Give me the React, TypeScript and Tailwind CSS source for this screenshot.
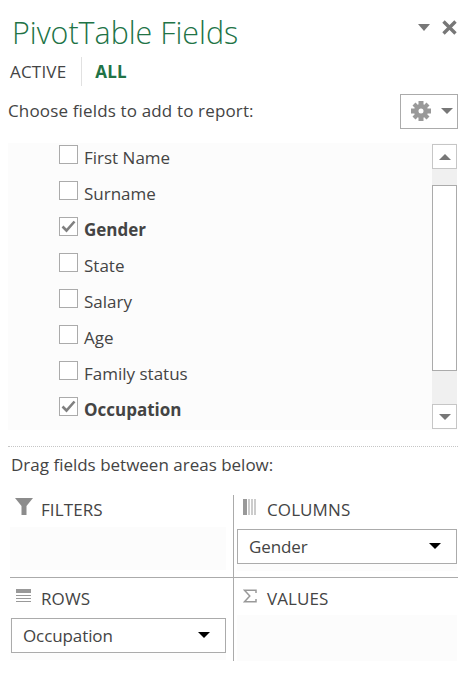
const font = "font-['Open_Sans',sans-serif]";

const fields = [
  { name: 'First Name', checked: false },
  { name: 'Surname', checked: false },
  { name: 'Gender', checked: true },
  { name: 'State', checked: false },
  { name: 'Salary', checked: false },
  { name: 'Age', checked: false },
  { name: 'Family status', checked: false },
  { name: 'Occupation', checked: true },
];

function Caret({ className }: { className: string }) {
  return <div className={`h-0 w-0 border-x-[6px] border-t-[6px] border-x-transparent ${className}`} />;
}

function Dropdown({ label }: { label: string }) {
  return (
    <div className="flex h-[35px] items-center justify-between border border-[#ababab] bg-white pl-[11px] pr-[15px] text-[17px] text-[#444]">
      <span className="tracking-[-0.1px]">{label}</span>
      <Caret className="-mt-[1px] border-t-black" />
    </div>
  );
}

function FieldRow({ name, checked }: { name: string; checked: boolean }) {
  return (
    <div className="flex h-9 items-center">
      <div className="-mt-[8px] flex h-[19px] w-[19px] items-center justify-center border border-[#ababab] bg-white">
        {checked && (
          <svg width="15" height="13" viewBox="0 0 15 13" fill="none">
            <path d="M1.5 6.5 L5.5 10.5 L13.5 1.5" stroke="#808080" strokeWidth="2.6" />
          </svg>
        )}
      </div>
      <span className={`ml-[6px] text-[17px] text-[#444] ${checked ? 'font-bold' : ''}`}>{name}</span>
    </div>
  );
}

export default function App() {
  return (
    <div className={`h-[673px] w-[468px] overflow-hidden bg-white ${font}`}>
      {/* Title */}
      <div className="flex h-[57px] items-start justify-between pl-[12px] pr-[11px] pt-[11px]">
        <h1 className="text-[30.4px] font-light leading-[44px] text-[#217346]">PivotTable Fields</h1>
        <div className="mt-[9px] flex items-center gap-[12px]">
          <div className="h-0 w-0 border-x-[6.5px] border-t-[7px] border-x-transparent border-t-[#777]" />
          <svg width="15" height="15" viewBox="0 0 15 15">
            <path d="M1.5 1.5 L13.5 13.5 M13.5 1.5 L1.5 13.5" stroke="#777" strokeWidth="3.4" />
          </svg>
        </div>
      </div>

      {/* Tabs */}
      <div className="flex h-[29px] items-center pl-[10px] text-[17px] leading-none">
        <span className="tracking-[0.2px] text-[#444]">ACTIVE</span>
        <div className="ml-[15px] h-[29px] w-px bg-[#e1e1e1]" />
        <span className="ml-[13px] font-bold tracking-[0.2px] text-[#217346]">ALL</span>
      </div>

      {/* Field chooser */}
      <div className="flex h-[50px] items-center justify-between pl-[8px] pr-[10px]">
        <span className="text-[17px] tracking-[0.15px] text-[#444]">Choose fields to add to report:</span>
        <div className="flex h-[35px] w-[58px] items-center gap-[10px] border border-[#ababab] bg-white pl-[10px]">
          <svg width="20" height="20" viewBox="0 0 20 20">
            <path
              d="M10 3 A7 7 0 1 0 10 17 A7 7 0 1 0 10 3 Z M10 7.5 A2.5 2.5 0 1 1 10 12.5 A2.5 2.5 0 1 1 10 7.5 Z"
              fill="#999"
              fillRule="evenodd"
            />
            <path
              d="M7.5 0 H12.5 V4 H7.5 Z M7.5 16 H12.5 V20 H7.5 Z M0 7.5 H4 V12.5 H0 Z M16 7.5 H20 V12.5 H16 Z M1.5 4.5 L4.5 1.5 L7.5 4.5 L4.5 7.5 Z M18.5 4.5 L15.5 1.5 L12.5 4.5 L15.5 7.5 Z M1.5 15.5 L4.5 18.5 L7.5 15.5 L4.5 12.5 Z M18.5 15.5 L15.5 18.5 L12.5 15.5 L15.5 12.5 Z"
              fill="#999"
            />
          </svg>
          <Caret className="border-t-[#777]" />
        </div>
      </div>

      {/* Field list */}
      <div className="ml-[8px] mr-[11px] mt-[7px] flex h-[287px] justify-between bg-[#fcfcfc] pb-[1px] pt-[1px]">
        <div className="-mt-[4px] pl-[51px]">
          {fields.map((f) => (
            <FieldRow key={f.name} name={f.name} checked={f.checked} />
          ))}
        </div>
        <div className="flex w-[25px] flex-col bg-[#f0f0f0]">
          <div className="flex h-[25px] items-center justify-center border border-[#c6c6c6] bg-white">
            <div className="h-0 w-0 border-x-[6px] border-b-[6px] border-x-transparent border-b-[#777]" />
          </div>
          <div className="mt-[16px] h-[186px] border border-[#ababab] bg-white" />
          <div className="mt-auto flex h-[25px] items-center justify-center border border-[#c6c6c6] bg-white">
            <Caret className="border-t-[#777]" />
          </div>
        </div>
      </div>

      {/* Areas */}
      <div className="ml-[8px] mr-[10px] mt-[16px] border-t border-dotted border-[#c6c6c6]" />
      <div className="pl-[11px] pt-[3px] text-[17px] leading-[30px] text-[#444]">Drag fields between areas below:</div>

      <div className="ml-[10px] mr-[10px] mt-[15px] grid h-[166px] grid-cols-[224px_224px] grid-rows-[83px_83px] text-[17px] text-[#444]">
        <div className="border-b border-r border-[#ababab] pr-[7px]">
          <div className="flex h-[34px] items-center pb-[5px]">
            <svg className="-mt-[6px] ml-[5px]" width="19" height="19" viewBox="0 0 19 19">
              <path d="M0 1 H18 L11.5 9 V18 H6.5 V9 Z" fill="#8c8c8c" />
            </svg>
            <span className="ml-[7px] tracking-[0.1px]">FILTERS</span>
          </div>
          <div className="-mt-[2px] h-[43px] bg-[#fcfcfc]" />
        </div>
        <div className="border-b border-[#ababab] pl-[3px] pr-px">
          <div className="flex h-[34px] items-center pb-[5px] pl-[6px]">
            <svg className="-mt-[6px]" width="14" height="16" viewBox="0 0 14 16">
              <path d="M0 0 H4 V16 H0 Z" fill="#999" />
              <path d="M6 0 V16 M9 0 V16 M12 0 V16" stroke="#999" strokeWidth="1" />
            </svg>
            <span className="ml-[10px] tracking-[0.1px]">COLUMNS</span>
          </div>
          <div className="bg-[#fcfcfc] pb-[7px]">
            <Dropdown label="Gender" />
          </div>
        </div>
        <div className="border-r border-[#ababab] pr-[7px]">
          <div className="flex h-[40px] items-center pt-[2px]">
            <svg className="-mt-[7px] ml-[6px]" width="15" height="14" viewBox="0 0 15 14">
              <path d="M0 0 H15 V4 H0 Z" fill="#999" />
              <path d="M0 6.5 H15 M0 9.5 H15 M0 12.5 H15" stroke="#999" strokeWidth="1" />
            </svg>
            <span className="ml-[10px] tracking-[0.1px]">ROWS</span>
          </div>
          <div className="bg-[#fcfcfc] pb-[7px] pl-px">
            <Dropdown label="Occupation" />
          </div>
        </div>
        <div className="pl-[3px]">
          <div className="flex h-[40px] items-center pl-[6px] pt-[2px]">
            <svg className="-mt-[7px]" width="14" height="14" viewBox="0 0 14 14" fill="none">
              <path d="M13 4 V1.2 H1.5 L6.8 7 L1.5 12.8 H13 V10" stroke="#999" strokeWidth="1.5" />
            </svg>
            <span className="ml-[10px] tracking-[0.1px]">VALUES</span>
          </div>
          <div className="-mt-[3px] mr-px h-[46px] bg-[#fcfcfc]" />
        </div>
      </div>
    </div>
  );
}
